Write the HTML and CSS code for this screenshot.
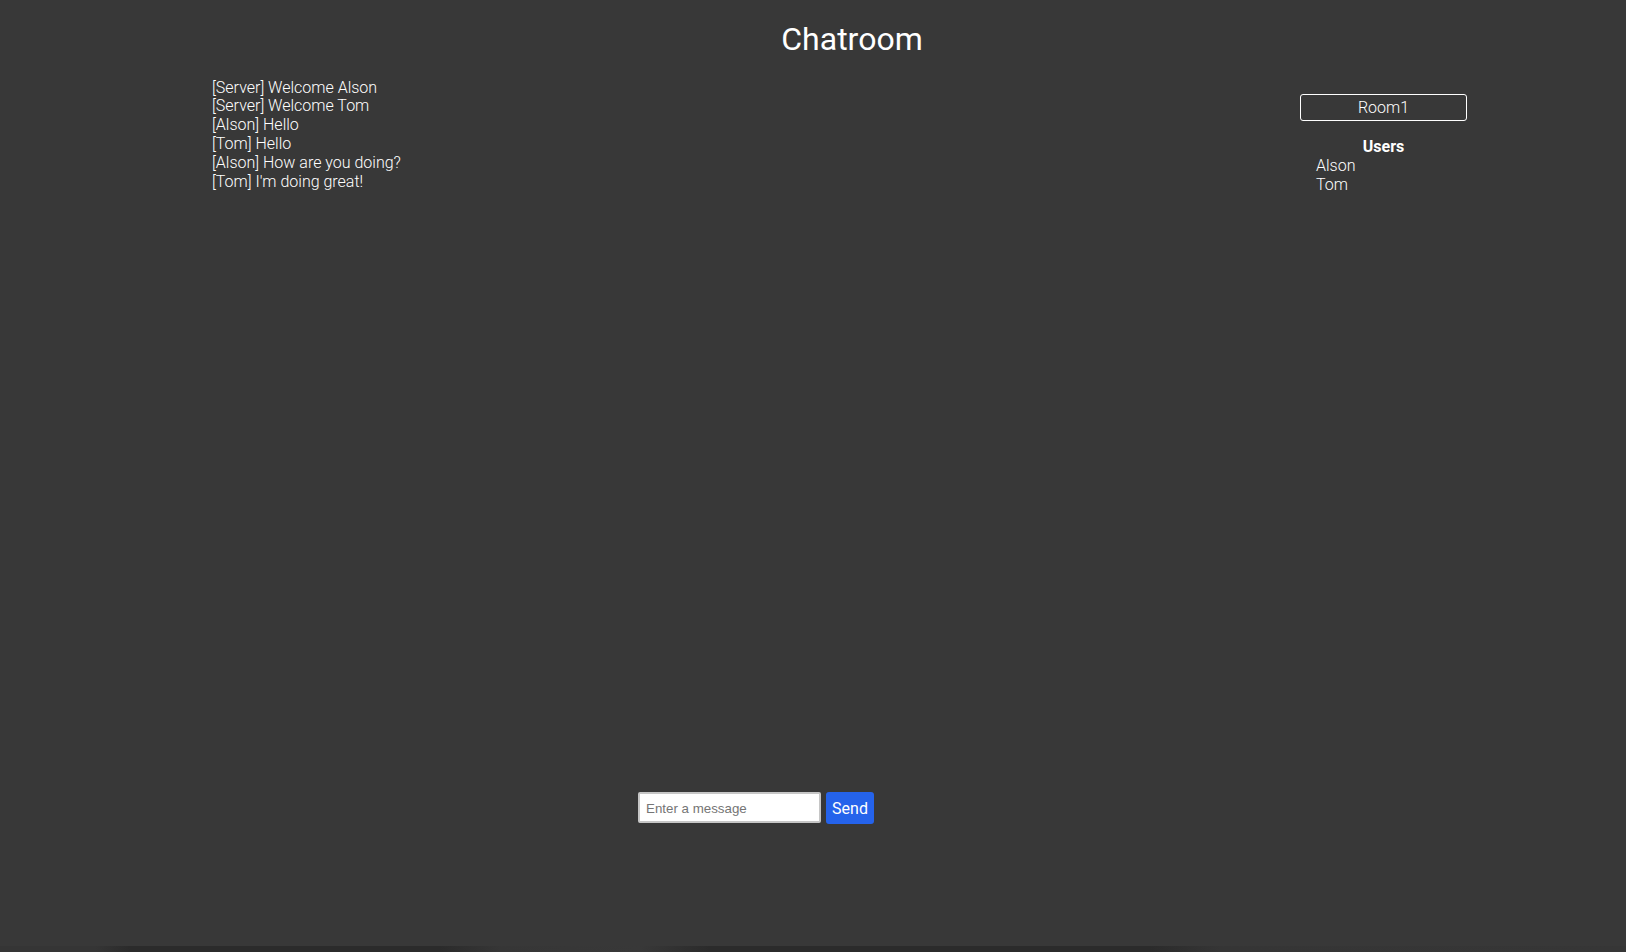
FILE: index.html
```html
<!DOCTYPE html>
<html lang="en">
<head>
<meta charset="utf-8">
<title>Chatroom</title>
<link rel="stylesheet" href="styles.css">
</head>
<body>
<div class="page">
  <h1 class="title">Chatroom</h1>
  <div class="main">
    <section class="chat">
      <ul class="messages">
        <li>[Server] Welcome Alson</li>
        <li>[Server] Welcome Tom</li>
        <li>[Alson] Hello</li>
        <li>[Tom] Hello</li>
        <li>[Alson] How are you doing?</li>
        <li>[Tom] I'm doing great!</li>
      </ul>
      <form class="composer">
        <input class="composer-input" type="text" placeholder="Enter a message">
        <button class="composer-send" type="button">Send</button>
      </form>
    </section>
    <aside class="sidebar">
      <div class="room">Room1</div>
      <h3 class="users-title">Users</h3>
      <ul class="users">
        <li>Alson</li>
        <li>Tom</li>
      </ul>
    </aside>
  </div>
  <div class="bottom-shade"></div>
</div>
</body>
</html>
```

FILE: styles.css
```css
html, body {
  margin: 0;
  padding: 0;
}

body {
  background: #383838;
  color: #ffffff;
  font-family: Roboto, "Liberation Sans", Arial, sans-serif;
  font-size: 16px;
}

.page {
  height: 100vh;
  display: flex;
  flex-direction: column;
}

.title {
  margin: 21px 0 20px 0;
  padding-left: 78px;
  text-align: center;
  font-size: 32px;
  font-weight: 400;
  line-height: 37.5px;
}

.main {
  flex: 1;
  display: flex;
  padding-left: 212px;
  min-height: 0;
}

.chat {
  width: 1088px;
  display: flex;
  flex-direction: column;
  padding-bottom: 122px;
}

.messages {
  flex: 1;
  list-style: none;
  margin: 0;
  padding: 0;
  font-weight: 300;
  line-height: 18.9px;
}

.composer {
  display: flex;
  justify-content: center;
  align-items: flex-start;
  gap: 5px;
  margin: 0;
}

.composer-input {
  box-sizing: border-box;
  width: 183px;
  height: 31px;
  margin: 0;
  padding: 2px 6px 0 6px;
  border: 2px solid #c6c6c6;
  border-radius: 2px;
  background: #ffffff;
  color: #000000;
  font-family: "Liberation Sans", Arial, sans-serif;
  font-size: 13.33px;
}

.composer-input::placeholder {
  color: #757575;
}

.composer-send {
  box-sizing: border-box;
  width: 48px;
  height: 32px;
  margin: 0;
  padding: 0;
  border: none;
  border-radius: 3px;
  background: #2563eb;
  color: #ffffff;
  font-family: Roboto, "Liberation Sans", Arial, sans-serif;
  font-size: 16px;
  font-weight: 400;
}

.sidebar {
  width: 167px;
  padding-top: 15px;
}

.room {
  box-sizing: border-box;
  height: 27px;
  border: 1px solid #ffffff;
  border-radius: 3px;
  text-align: center;
  font-weight: 300;
  line-height: 25px;
}

.users-title {
  margin: 17px 0 0 0;
  text-align: center;
  font-size: 16px;
  font-weight: 700;
  line-height: 18.75px;
}

.users {
  list-style: none;
  margin: 0;
  padding: 1px 0 0 16px;
  font-weight: 300;
  line-height: 18.75px;
}

.bottom-shade {
  height: 6px;
  background: linear-gradient(to right,
    #353535 0px, #353535 95px,
    #2b2b2b 130px, #2b2b2b 440px,
    #363636 500px, #383838 640px,
    #2b2b2b 710px, #2b2b2b 1150px,
    #353535 1220px, #363636 1626px);
}
```
